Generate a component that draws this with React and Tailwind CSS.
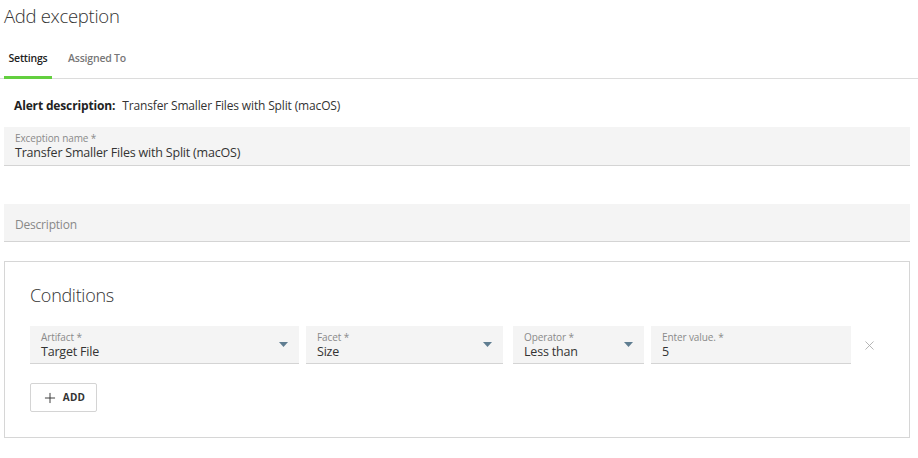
import { Plus, X } from 'lucide-react';

const FONT = { fontFamily: '"Open Sans", "Noto Sans", sans-serif' };

function Caret() {
  return (
    <svg width="9" height="5" viewBox="0 0 9 5" className="shrink-0">
      <path d="M0 0 L9 0 L4.5 5 Z" fill="#5f7d91" />
    </svg>
  );
}

function Field({ label, value, width, select }) {
  return (
    <div className={`${width} h-[38px] bg-[#f4f4f4] border-b border-[#d4d4d4] flex items-center pl-[11px] pr-[11px]`}>
      <div className="flex-1 min-w-0 flex flex-col pt-[1px]">
        <span className="text-[10px] leading-[12px] text-[#8a8a8a] tracking-[-0.1px]">{label}</span>
        <span className="text-[12.5px] leading-[17px] text-[#333] tracking-[-0.2px]">{value}</span>
      </div>
      {select && <Caret />}
    </div>
  );
}

export default function App() {
  return (
    <div className="w-[918px] h-[458px] bg-white overflow-hidden" style={FONT}>
      <h1 className="pl-[4px] pt-[3px] text-[18.5px] leading-[26px] font-light text-[#333] tracking-[-0.3px]">
        Add exception
      </h1>

      {/* Tabs */}
      <div className="mt-[20px] flex items-end border-b border-[#dcdcdc] pl-[4px]">
        <div className="w-[48px] flex justify-center h-[30px] pb-[8px] items-center border-b-[3px] border-[#63cf3f] -mb-[1px]">
          <span className="text-[10.5px] font-semibold text-[#222] tracking-[-0.2px]">Settings</span>
        </div>
        <div className="ml-[16px] h-[30px] pb-[8px] flex items-center -mb-[1px] border-b-[3px] border-transparent">
          <span className="text-[10.5px] font-semibold text-[#777] tracking-[-0.2px]">Assigned To</span>
        </div>
      </div>

      <div className="pl-[4px] pr-[8px]">
        <div className="mt-[19px] pl-[10px] flex items-center text-[12px] leading-[16px] tracking-[-0.15px]">
          <span className="font-bold text-[#222]">Alert description:</span>
          <span className="ml-[7px] text-[#333]">Transfer Smaller Files with Split (macOS)</span>
        </div>

        {/* Exception name */}
        <div className="mt-[13px] h-[39px] bg-[#f4f4f4] border-b border-[#d4d4d4] pl-[11px] flex flex-col justify-center">
          <span className="text-[10px] leading-[12px] text-[#8a8a8a] tracking-[-0.1px]">Exception name *</span>
          <span className="text-[12.5px] leading-[17px] text-[#333] tracking-[-0.2px]">Transfer Smaller Files with Split (macOS)</span>
        </div>

        {/* Description */}
        <div className="mt-[38px] h-[38px] bg-[#f4f4f4] border-b border-[#d4d4d4] pl-[11px] flex items-center">
          <span className="text-[12px] text-[#888] tracking-[-0.2px] pt-[4px]">Description</span>
        </div>

        {/* Conditions */}
        <div className="mt-[19px] h-[177px] border border-[#d6d6d6] pl-[25px] pr-[12px]">
          <h2 className="mt-[21px] text-[18px] leading-[24px] font-light text-[#333] tracking-[-0.3px]">Conditions</h2>
          <div className="mt-[19px] flex items-center">
            <Field width="w-[269px]" label="Artifact *" value="Target File" select />
            <Field width="w-[197px] ml-[7px]" label="Facet *" value="Size" select />
            <Field width="w-[131px] ml-[10px]" label="Operator *" value="Less than" select />
            <Field width="w-[200px] ml-[7px]" label="Enter value. *" value="5" />
            <X size={15} strokeWidth={1.3} className="ml-[11px] text-[#a5a5a5]" />
          </div>
          <button className="mt-[19px] w-[67px] h-[29px] border border-[#d4d4d4] rounded-[2px] flex items-center justify-center gap-[5px] text-[#333]">
            <Plus size={16} strokeWidth={1.4} />
            <span className="text-[10px] font-bold tracking-[0.2px]">ADD</span>
          </button>
        </div>
      </div>
    </div>
  );
}
